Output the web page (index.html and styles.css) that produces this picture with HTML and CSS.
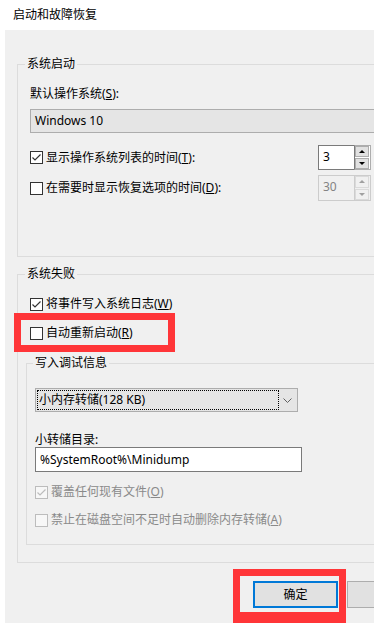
FILE: index.html
```html
<!DOCTYPE html>
<html lang="zh-CN">
<head>
<meta charset="utf-8">
<title>启动和故障恢复</title>
<link rel="stylesheet" href="styles.css">
</head>
<body>
<div class="title">启动和故障恢复</div>
<div class="panel">
  <div class="group g1">
    <div class="legend">系统启动</div>
    <div class="label lbl-os">默认操作系统(<u>S</u>):</div>
    <div class="combo combo-os"><span>Windows 10</span></div>
    <div class="row r1">
      <div class="check"><span class="box"><svg width="11" height="11" viewBox="0 0 11 11"><polyline points="1.5,5.5 4,8 9.5,2.5" fill="none" stroke="#333" stroke-width="1.2"/></svg></span>显示操作系统列表的时间(<u>T</u>):</div>
      <div class="spin">
        <div class="spin-input">3</div>
        <div class="spin-btns"><span class="sb up"></span><span class="sb down"></span></div>
      </div>
    </div>
    <div class="row r2">
      <div class="check"><span class="box"></span>在需要时显示恢复选项的时间(<u>D</u>):</div>
      <div class="spin disabled">
        <div class="spin-input">30</div>
        <div class="spin-btns"><span class="sb up"></span><span class="sb down"></span></div>
      </div>
    </div>
  </div>

  <div class="group g2">
    <div class="legend">系统失败</div>
    <div class="check r-w"><span class="box"><svg width="11" height="11" viewBox="0 0 11 11"><polyline points="1.5,5.5 4,8 9.5,2.5" fill="none" stroke="#333" stroke-width="1.2"/></svg></span>将事件写入系统日志(<u>W</u>)</div>
    <div class="check r-r"><span class="box"></span>自动重新启动(<u>R</u>)</div>
    <div class="group inner">
      <div class="legend lg-inner">写入调试信息</div>
      <div class="combo combo-dump">
        <div class="focus">小内存转储(128 KB)</div>
        <div class="arrow"><svg width="9" height="5" viewBox="0 0 9 5"><polyline points="0.5,0.5 4.5,4.5 8.5,0.5" fill="none" stroke="#606060" stroke-width="1"/></svg></div>
      </div>
      <div class="label lbl-dir">小转储目录:</div>
      <div class="textbox">%SystemRoot%\Minidump</div>
      <div class="check dis r-o"><span class="box"><svg width="11" height="11" viewBox="0 0 11 11"><polyline points="1.5,5.5 4,8 9.5,2.5" fill="none" stroke="#bcbcbc" stroke-width="1.2"/></svg></span>覆盖任何现有文件(<u>O</u>)</div>
      <div class="check dis r-a"><span class="box"></span>禁止在磁盘空间不足时自动删除内存转储(<u>A</u>)</div>
    </div>
  </div>

  <div class="buttons">
    <div class="btn primary">确定</div>
    <div class="btn"></div>
  </div>
</div>
<div class="mark mark-r"></div>
<div class="mark mark-ok"></div>
</body>
</html>
```

FILE: styles.css
```css
html, body {
  margin: 0;
  padding: 0;
}
body {
  width: 379px;
  height: 623px;
  overflow: hidden;
  position: relative;
  background: #ffffff;
  color: #000;
  font-family: "Noto Sans", "Noto Sans CJK SC", sans-serif;
  font-size: 12px;
  line-height: 16px;
}
u { text-decoration: underline; text-underline-offset: 1px; }

.title {
  height: 30px;
  line-height: 30px;
  padding-left: 13px;
}

.panel {
  margin-left: 5px;
  width: 369px;
  height: 593px;
  box-sizing: border-box;
  padding: 34px 0 0 12px;
  background: #f0f0f0;
  overflow: hidden;
}

.group {
  width: 370px;
  box-sizing: border-box;
  border: 1px solid #dcdcdc;
  padding: 0 12px;
}
.legend {
  display: table;
  line-height: 16px;
  margin: -9px 0 0 -5px;
  padding: 0 2px;
  background: #f0f0f0;
}

.g1 { padding-bottom: 55px; }
.lbl-os { margin-top: 14px; line-height: 16px; }

.combo {
  box-sizing: border-box;
  height: 24px;
  border: 1px solid #adadad;
  background: #e5e5e5;
  display: flex;
  align-items: center;
}
.combo-os {
  width: 360px;
  margin-top: 7px;
  padding-left: 4px;
}

.row {
  width: 341px;
  height: 25px;
  display: flex;
  align-items: center;
  justify-content: space-between;
}
.r1 { margin-top: 12px; }
.r2 { margin-top: 5px; height: 26px; }

.check {
  display: flex;
  align-items: center;
  height: 16px;
  line-height: 16px;
  white-space: nowrap;
}
.box {
  width: 13px;
  height: 13px;
  box-sizing: border-box;
  border: 1px solid #333;
  background: #fff;
  margin-right: 3px;
  display: flex;
  align-items: center;
  justify-content: center;
  flex: none;
}
.check.dis { color: #8a8a8a; }
.check.dis .box { border-color: #bcbcbc; background: #f7f7f7; }

.spin {
  display: flex;
  width: 53px;
  height: 25px;
  box-sizing: border-box;
}
.spin-input {
  width: 36px;
  box-sizing: border-box;
  border: 1px solid #7a7a7a;
  border-right: none;
  background: #fff;
  padding-left: 4px;
  line-height: 21px;
}
.spin-btns {
  width: 17px;
  box-sizing: border-box;
  border: 1px solid #adadad;
  border-left: 1px solid #7a7a7a;
  background: #fff;
  padding: 0 1px 0 0;
  display: flex;
  flex-direction: column;
  gap: 1px;
}
.sb {
  flex: 1;
  background: #e1e1e1;
  border: 1px solid #adadad;
  display: flex;
  align-items: center;
  justify-content: center;
}
.sb::after {
  content: "";
  width: 0;
  height: 0;
  border-left: 3px solid transparent;
  border-right: 3px solid transparent;
}
.sb.up::after { border-bottom: 3px solid #000; }
.sb.down::after { border-top: 3px solid #000; }

.spin.disabled { height: 26px; }
.spin.disabled .spin-input {
  border-color: #cccccc;
  background: #f0f0f0;
  color: #838383;
}
.spin.disabled .spin-btns {
  border-color: #cccccc;
  background: #f0f0f0;
}
.spin.disabled .sb {
  background: #f0f0f0;
  border-color: #dadada;
}
.spin.disabled .sb.up::after { border-bottom-color: #a0a0a0; }
.spin.disabled .sb.down::after { border-top-color: #a0a0a0; }

.g2 {
  margin-top: 17px;
  padding-bottom: 17px;
}
.r-w { margin-top: 14px; }
.r-r { margin-top: 13px; }

.inner {
  width: 360px;
  margin: 22px 0 0 -4px;
  padding: 0 8px 16px 8px;
}
.lg-inner { margin-left: -2px; }

.combo-dump {
  width: 263px;
  margin-top: 17px;
  padding: 1px;
}
.focus {
  width: 242px;
  height: 20px;
  box-sizing: border-box;
  border: 1px dotted #000;
  padding-left: 1px;
  line-height: 18px;
  white-space: nowrap;
}
.arrow {
  flex: 1;
  display: flex;
  align-items: center;
  justify-content: center;
  padding-top: 1px;
}

.lbl-dir {
  margin-top: 21px;
  line-height: 14px;
}
.textbox {
  width: 267px;
  height: 25px;
  box-sizing: border-box;
  border: 1px solid #7a7a7a;
  background: #fff;
  padding-left: 4px;
  line-height: 23px;
}
.r-o { margin-top: 12px; }
.r-a { margin-top: 12px; }

.buttons {
  display: flex;
  gap: 9px;
  margin-top: 18px;
  padding-left: 236px;
}
.btn {
  flex: none;
  width: 85px;
  height: 27px;
  box-sizing: border-box;
  border: 1px solid #adadad;
  background: #e1e1e1;
  display: flex;
  align-items: center;
  justify-content: center;
}
.btn.primary {
  border: 2px solid #0078d7;
}

.mark {
  position: absolute;
  box-sizing: border-box;
  border: 7px solid #ff3538;
}
.mark-r {
  left: 14px;
  top: 313px;
  width: 161px;
  height: 39px;
}
.mark-ok {
  left: 233px;
  top: 569px;
  width: 113px;
  height: 60px;
  border-bottom-width: 17px;
}
```
